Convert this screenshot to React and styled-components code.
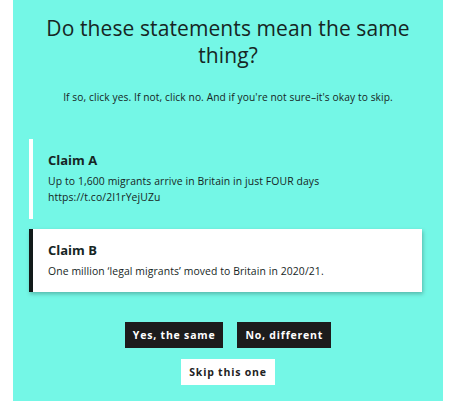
import React from "react";
import styled, { createGlobalStyle } from "styled-components";

const GlobalStyle = createGlobalStyle`
  html, body { margin: 0; padding: 0; background: #ffffff; }
  body { font-family: "Open Sans", "Noto Sans", sans-serif; }
`;

const Panel = styled.div`
  margin-left: 13px;
  width: 430px;
  min-height: 401px;
  background: #74f7e6;
  color: #162624;
  padding: 15px 16px 0;
  box-sizing: border-box;
  display: flex;
  flex-direction: column;
`;

const Title = styled.h1`
  margin: 0;
  font-size: 21px;
  font-weight: 400;
  line-height: 27px;
  text-align: center;
  letter-spacing: 0.1px;
`;

const Hint = styled.p`
  margin: 21px 0 0;
  font-size: 10.2px;
  text-align: center;
  letter-spacing: 0.1px;
`;

const Claims = styled.div`
  margin: 35px 5px 0 0;
  display: flex;
  flex-direction: column;
  gap: 10px;
`;

const Claim = styled.div`
  border-left: 4px solid ${(p) => (p.$active ? "#111a19" : "#ffffff")};
  background: ${(p) => (p.$active ? "#ffffff" : "transparent")};
  box-shadow: ${(p) => (p.$active ? "1px 2px 4px rgba(0,0,0,0.25)" : "none")};
  padding: ${(p) => (p.$active ? "13px 14px 13px 15px" : "13px 14px 14px 15px")};
`;

const ClaimTitle = styled.h3`
  margin: 0 0 4px;
  font-size: 13px;
  font-weight: 700;
  line-height: 17px;
`;

const ClaimText = styled.p`
  margin: 0;
  font-size: 10.4px;
  line-height: 16px;
  letter-spacing: 0.1px;
`;

const Actions = styled.div`
  margin-top: 30px;
  display: flex;
  flex-direction: column;
  align-items: center;
  gap: 11px;
`;

const Row = styled.div`
  display: flex;
  gap: 14px;
`;

const Button = styled.button`
  border: none;
  height: 26px;
  padding: 0 8px;
  font-family: inherit;
  font-size: 10.5px;
  font-weight: 700;
  letter-spacing: 0.8px;
  cursor: pointer;
  background: ${(p) => (p.$light ? "#ffffff" : "#1c1c1c")};
  color: ${(p) => (p.$light ? "#222" : "#ffffff")};
`;

export default function App() {
  return (
    <>
      <GlobalStyle />
      <Panel>
        <Title>Do these statements mean the same thing?</Title>
        <Hint>If so, click yes. If not, click no. And if you're not sure–it's okay to skip.</Hint>
        <Claims>
          <Claim>
            <ClaimTitle>Claim A</ClaimTitle>
            <ClaimText>
              Up to 1,600 migrants arrive in Britain in just FOUR days
              <br />
              https://t.co/2I1rYejUZu
            </ClaimText>
          </Claim>
          <Claim $active>
            <ClaimTitle>Claim B</ClaimTitle>
            <ClaimText>One million ‘legal migrants’ moved to Britain in 2020/21.</ClaimText>
          </Claim>
        </Claims>
        <Actions>
          <Row>
            <Button>Yes, the same</Button>
            <Button>No, different</Button>
          </Row>
          <Button $light>Skip this one</Button>
        </Actions>
      </Panel>
    </>
  );
}
